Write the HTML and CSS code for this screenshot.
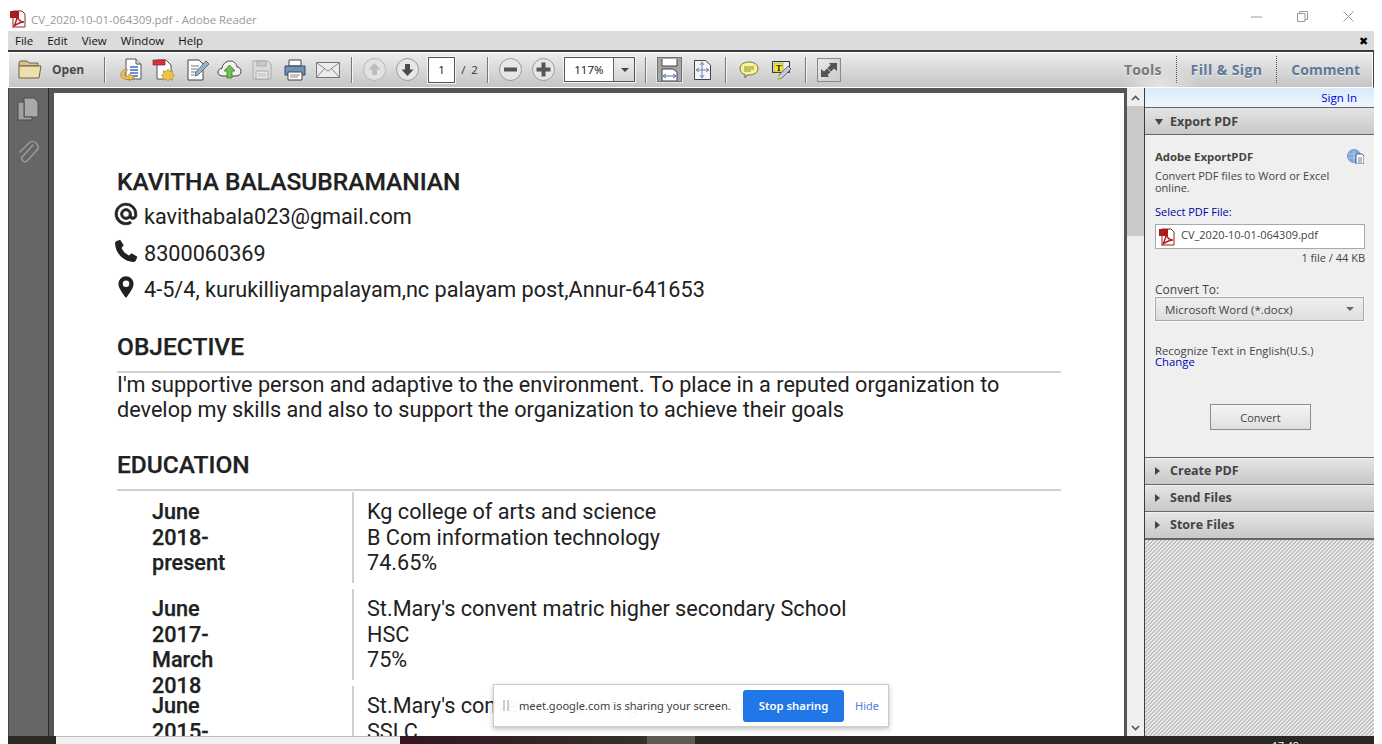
FILE: index.html
```html
<!DOCTYPE html>
<html lang="en">
<head>
  <meta charset="UTF-8">
  <title>CV_2020-10-01-064309.pdf - Adobe Reader</title>
  <link rel="stylesheet" href="styles.css">
</head>
<body>
<div class="window">

  <!-- title bar -->
  <div class="titlebar">
    <svg class="pdf-icon" width="17" height="18" viewBox="0 0 17 18"><path d="M3 1h9l3 3v13H3z" fill="#fff" stroke="#8a2a2a"/><path d="M0 1h9v7H0z" fill="#a81c1c"/><path d="M4 16c2-4 3-7 3-10 1 4 3 6 7 6-4 0-7 2-10 4z" fill="none" stroke="#b71c1c" stroke-width="1.4"/></svg>
    <span class="title-text">CV_2020-10-01-064309.pdf - Adobe Reader</span>
    <div class="win-buttons">
      <svg width="11" height="11" viewBox="0 0 11 11"><path d="M0 6h11" stroke="#999"/></svg>
      <svg width="11" height="11" viewBox="0 0 11 11"><path d="M.5 2.500h7.500v8h-7.500zM2.500 2.500v-2h8v8h-2.500" fill="none" stroke="#999"/></svg>
      <svg width="11" height="11" viewBox="0 0 11 11"><path d="M.5.500l10 10M10.500.500l-10 10" stroke="#999"/></svg>
    </div>
  </div>

  <!-- menu -->
  <div class="menubar">
    <span>File</span><span>Edit</span><span>View</span><span>Window</span><span>Help</span>
    <span class="menu-close">&#10006;</span>
  </div>

  <!-- toolbar -->
  <div class="toolbar">
    <svg class="tb-folder" width="24" height="19" viewBox="0 0 24 19"><path d="M1 3l1-2h7l2 2h9v3H1z" fill="#d9c38a" stroke="#6d6243"/><path d="M1 18V6h22l-2 12z" fill="#eedfae" stroke="#6d6243"/></svg>
    <span class="tb-open">Open</span>
    <span class="tb-sep sep-open"></span>

    <div class="tb-group">
      <svg width="23" height="24" viewBox="0 0 23 24"><path d="M7 1h10l5 5v15H7z" fill="#fff" stroke="#555"/><path d="M17 1v5h5" fill="#ddd" stroke="#555"/><path d="M11 9h8M11 12h8M11 15h8M13 18h6" stroke="#3a6fc0" stroke-width="1.300"/><path d="M8 11c-5 1-7 4-6 7 1 3 5 4 9 3l-1 2 6-4-6-3v2c-3 1-5 0-5-2 0-1 1-2 3-3z" fill="#edc04f" stroke="#a5802a" stroke-width=".7"/></svg>
      <svg width="23" height="24" viewBox="0 0 23 24"><path d="M5 2h9l5 5v14H5z" fill="#fff" stroke="#555"/><path d="M1 2h12v5H1z" fill="#d8333a" stroke="#8d1f23" stroke-width=".7"/><path d="M16 11l1.800 2.600 3-.8-.4 3 2.400 1.700-2.400 1.700.4 3-3-.8-1.800 1.500-1.800-1.500-3 .8.400-3-2.400-1.700 2.400-1.700-.4-3 3 .8z" fill="#eec247" stroke="#ad8a28" stroke-width=".6"/></svg>
      <svg class="tb-notes" width="22" height="22" viewBox="0 0 22 22"><path d="M1 1h11l4 4v16H1z" fill="#fff" stroke="#444"/><path d="M4 7h8M4 10h7M4 13h5M4 16h3" stroke="#777"/><path d="M8 17l1-4L19 2l3 3L11 16z" fill="#9db2cc" stroke="#3b5478" stroke-width=".8"/></svg>
      <svg class="tb-cloud" width="25" height="19" viewBox="0 0 25 19"><path d="M6 16c-3 0-5-1.500-5-4s2-3.500 4-3.500C5.500 4 9 1 13 1s6.500 2.500 7 6c2.500 0 4 2 4 4.500S22 16 19 16z" fill="#f2f2f2" stroke="#444"/><path d="M12.500 5l5.500 6h-3v7h-5v-7H7z" fill="#6fc24a" stroke="#3c7d25" stroke-width=".8"/></svg>
      <svg width="20" height="20" viewBox="0 0 20 20"><path d="M1 1h15l3 3v15H1z" fill="#dcdcdc" stroke="#aaa"/><path d="M5 1h9v5H5z" fill="#c9c9c9" stroke="#aaa"/><path d="M4 11h12v8H4z" fill="#e8e8e8" stroke="#aaa"/><path d="M6 14h8M6 16h8" stroke="#bbb"/></svg>
      <svg class="tb-print" width="22" height="22" viewBox="0 0 22 22"><path d="M5 1h12v6H5z" fill="#fff" stroke="#444"/><path d="M1 7h20v9H1z" fill="#7391b5" stroke="#2b4a73" stroke-linejoin="round"/><path d="M4 13h14v8H4z" fill="#fff" stroke="#444"/><path d="M6 16h10M6 18h8" stroke="#888"/></svg>
      <svg width="24" height="16" viewBox="0 0 24 16"><path d="M.5.500h23v15H.5z" fill="#ececec" stroke="#777"/><path d="M.5.500L12 9 23.500.500M.5 15.500l8-9M23.500 15.500l-8-9" fill="none" stroke="#888"/></svg>
    </div>
    <span class="tb-sep sep-send"></span>

    <div class="tb-group">
      <svg width="23" height="23" viewBox="0 0 23 23"><circle cx="11.500" cy="11.500" r="11" fill="#e2e2e2" stroke="#b5b5b5"/><path d="M11.500 5l6 6.500h-3.500V17H9v-5.500H5.500z" fill="#bcbcbc"/></svg>
      <svg width="23" height="23" viewBox="0 0 23 23"><circle cx="11.500" cy="11.500" r="11" fill="#e6e6e6" stroke="#999"/><path d="M11.500 18l-6-6.500H9V6h5v5.500h3.500z" fill="#4a4a4a"/></svg>
      <span class="page-input">1</span>
      <span class="page-total">/ 2</span>
    </div>
    <span class="tb-sep sep-page"></span>

    <div class="tb-group">
      <svg width="23" height="23" viewBox="0 0 23 23"><circle cx="11.500" cy="11.500" r="11" fill="#e6e6e6" stroke="#999"/><path d="M5 9.500h13v4H5z" fill="#555"/></svg>
      <svg width="23" height="23" viewBox="0 0 23 23"><circle cx="11.500" cy="11.500" r="11" fill="#e6e6e6" stroke="#999"/><path d="M9.500 4.500h4v5h5v4h-5v5h-4v-5h-5v-4h5z" fill="#555"/></svg>
      <div class="zoom-select">
        <span class="zoom-value">117%</span>
        <span class="zoom-arrow"></span>
      </div>
    </div>
    <span class="tb-sep sep-zoom"></span>

    <span class="fit-btn">
      <svg width="17" height="22" viewBox="0 0 17 22"><path d="M1 0v7h15V0" fill="#fff" stroke="#444"/><path d="M1 10h11l4 3v9H1z" fill="#fff" stroke="#444"/><path d="M2 17h13M2 17l3-2M2 17l3 2M15 17l-3-2M15 17l-3 2" stroke="#4a6eb0" fill="none"/></svg>
    </span>
    <svg class="tb-fitall" width="17" height="20" viewBox="0 0 17 20"><path d="M.5.500h11l5 4.500v14.500H.5z" fill="#f4f4f4" stroke="#444"/><path d="M8 2v16M2 10h13M8 2L6 5M8 2l2 3M8 18l-2-3M8 18l2-3M2 10l3-2M2 10l3 2M15 10l-3-2M15 10l-3 2" stroke="#6b84bd" fill="none"/></svg>
    <span class="tb-sep sep-fit"></span>

    <svg class="tb-note" width="20" height="18" viewBox="0 0 20 18"><path d="M10 1c5 0 9 2.500 9 6.500S15 14 10 14H8l-2 3 0-3.500C3 13 1 10.500 1 7.500 1 3.500 5 1 10 1z" fill="#fbf48c" stroke="#6e6e55"/><path d="M5 6h10M5 8h10M5 10h7" stroke="#8c8a4a"/></svg>
    <svg class="tb-markup" width="20" height="20" viewBox="0 0 20 20"><path d="M.5 1.500h17v11H.5z" fill="#eee" stroke="#333"/><path d="M2 3h9v9H2z" fill="#fbee2a" stroke="#777" stroke-width=".5"/><text class="tb-t" x="3.800" y="10.500">T</text><path d="M6 19l1-4 9-9 3 3-9 9z" fill="#c3c9d4" stroke="#6c7380"/><path d="M5 19l2-4 3 3z" fill="#edcd55"/></svg>
    <span class="tb-sep sep-note"></span>

    <span class="full-btn">
      <svg width="18" height="18" viewBox="0 0 18 18"><path d="M9 2h8v8l-3-2.500-3 3L7.500 7l3-3zM9 16H1V8l3 2.500 3-3L10.500 11l-3 3z" fill="#545454"/></svg>
    </span>

    <div class="tb-tabs">
      <span class="tab tab-tools">Tools</span>
      <span class="tab-sep"></span>
      <span class="tab tab-fill">Fill &amp; Sign</span>
      <span class="tab-sep"></span>
      <span class="tab">Comment</span>
    </div>
  </div>

  <!-- main area -->
  <div class="main">
    <div class="nav-pane">
      <svg width="22" height="24" viewBox="0 0 22 24"><path d="M7 1h10l4 4v15H7z" fill="#a9a9a9" stroke="#4d4d4d"/><path d="M1 5h6v15h8v3H1z" fill="#a0a0a0" stroke="#4d4d4d"/></svg>
      <svg width="22" height="24" viewBox="0 0 22 24"><path d="M16 5l-10 11c-2 2-1 4 0 5s3 1 5-1l9-10c2-2 1-5-1-7s-5-2-7 0L3 12" fill="none" stroke="#9a9a9a" stroke-width="1.600" stroke-linecap="round"/></svg>
    </div>

    <div class="doc-view">
      <div class="page">
        <h1 class="cv-name">KAVITHA BALASUBRAMANIAN</h1>
        <div class="contact contact-first">
          <svg width="26" height="26" viewBox="0 0 24 24"><path d="M12 2a10 10 0 1 0 5 18.600l-1-1.800A8 8 0 1 1 20 12v1c0 1-.7 1.800-1.600 1.800S17 14 17 13v-1a5 5 0 1 0-1.500 3.600c.7.900 1.700 1.400 2.900 1.400 2 0 3.600-1.700 3.600-4v-1A10 10 0 0 0 12 2zm0 13a3 3 0 1 1 0-6 3 3 0 0 1 0 6z" fill="#212121" stroke="#212121" stroke-width=".7"/></svg>
          <span>kavithabala023@gmail.com</span>
        </div>
        <div class="contact">
          <svg width="26" height="26" viewBox="0 0 24 24"><path d="M6.600 1.500l3.300 5.300-2 2.500c1.200 3 3.800 5.600 6.800 6.800l2.500-2 5.300 3.300-1.500 3.700c-.4.700-1 1-1.800 1C10 22 2 14 1.900 4.800c0-.8.300-1.400 1-1.800z" fill="#212121"/></svg>
          <span>8300060369</span>
        </div>
        <div class="contact">
          <svg width="26" height="26" viewBox="0 0 24 24"><path d="M12 2a7 7 0 0 0-7 7c0 5 7 13 7 13s7-8 7-13a7 7 0 0 0-7-7zm0 10a3 3 0 1 1 0-6 3 3 0 0 1 0 6z" fill="#212121"/></svg>
          <span>4-5/4, kurukilliyampalayam,nc palayam post,Annur-641653</span>
        </div>

        <h2 class="section-head sec-objective">OBJECTIVE</h2>
        <p class="objective">I'm supportive person and adaptive to the environment. To place in a reputed organization to<br>develop my skills and also to support the organization to achieve their goals</p>

        <h2 class="section-head sec-education">EDUCATION</h2>
        <div class="edu-row">
          <div class="edu-date">June<br>2018-<br>present</div>
          <div class="edu-info">Kg college of arts and science<br>B Com information technology<br>74.65%</div>
        </div>
        <div class="edu-row">
          <div class="edu-date">June<br>2017-<br>March<br>2018</div>
          <div class="edu-info">St.Mary's convent matric higher secondary School<br>HSC<br>75%</div>
        </div>
        <div class="edu-row">
          <div class="edu-date">June<br>2015-</div>
          <div class="edu-info">St.Mary's convent matric higher secondary School<br>SSLC</div>
        </div>
      </div>
    </div>

    <div class="v-scroll">
      <svg class="sb-arrow" width="9" height="6" viewBox="0 0 9 6"><path d="M1 5l3.500-3.500L8 5" fill="none" stroke="#555" stroke-width="1.600"/></svg>
      <div class="sb-thumb"></div>
      <svg class="sb-arrow sb-down" width="9" height="6" viewBox="0 0 9 6"><path d="M1 1l3.500 3.500L8 1" fill="none" stroke="#555" stroke-width="1.600"/></svg>
    </div>

    <aside class="side-panel">
      <div class="sign-in"><a>Sign In</a></div>
      <div class="acc-head"><span class="arrow-down"></span>Export PDF</div>
      <div class="export-body">
        <div class="export-title">
          <b>Adobe ExportPDF</b>
          <svg width="17" height="15" viewBox="0 0 17 15"><circle cx="7" cy="7" r="6.500" fill="#7fa8dc" stroke="#4a72aa" stroke-width=".6"/><path d="M1 5h12M1 9h12M7 1v12" stroke="#cfe0f5" stroke-width=".6"/><path d="M9 5h6l2 2v8H9z" fill="#fff" stroke="#3c5f90"/><path d="M11 9h4M11 11h4M11 13h4" stroke="#3c5f90" stroke-width=".8"/></svg>
        </div>
        <p class="export-desc">Convert PDF files to Word or Excel online.</p>
        <div class="select-label">Select PDF File:</div>
        <div class="file-box">
          <svg width="17" height="18" viewBox="0 0 17 18"><path d="M3 1h9l3 3v13H3z" fill="#fff" stroke="#8a2a2a"/><path d="M0 1h9v7H0z" fill="#a81c1c"/><path d="M4 16c2-4 3-7 3-10 1 4 3 6 7 6-4 0-7 2-10 4z" fill="none" stroke="#b71c1c" stroke-width="1.400"/></svg>
          <span class="file-name">CV_2020-10-01-064309.pdf</span>
        </div>
        <div class="file-size">1 file / 44 KB</div>
        <div class="convert-label">Convert To:</div>
        <div class="convert-select">
          <span>Microsoft Word (*.docx)</span>
          <span class="select-arrow"></span>
        </div>
        <div class="recognize">Recognize Text in English(U.S.)</div>
        <div class="change">Change</div>
        <div class="convert-row"><span class="convert-btn">Convert</span></div>
      </div>
      <div class="acc-head acc-line"><span class="arrow-right"></span>Create PDF</div>
      <div class="acc-head acc-line"><span class="arrow-right"></span>Send Files</div>
      <div class="acc-head acc-line"><span class="arrow-right"></span>Store Files</div>
      <div class="hatch"></div>
    </aside>

    <div class="share-bar">
      <span class="share-pause"></span>
      <span class="share-text">meet.google.com is sharing your screen.</span>
      <span class="share-stop">Stop sharing</span>
      <span class="share-hide">Hide</span>
    </div>
  </div>

  <!-- bottom edge of the desktop -->
  <div class="bottom-strip">
    <span class="strip-dark"></span>
    <span class="strip-light"></span>
    <span class="strip-maroon"></span>
    <span class="strip-tab"></span>
    <span class="strip-rest"><span class="strip-clock">17:48</span></span>
  </div>
</div>
</body>
</html>
```

FILE: styles.css
```css
* {
  box-sizing: border-box;
}
html, body {
  margin: 0;
  height: 744px;
  overflow: hidden;
  background: #fff;
}
body {
  font-family: "Open Sans", sans-serif;
}
.window {
  display: flex;
  flex-direction: column;
  width: 1366px;
  height: 744px;
  margin-left: 8px;
}

/* title bar */
.titlebar {
  height: 31px;
  display: flex;
  align-items: center;
  padding: 7px 0 0 2px;
  flex: none;
}
.title-text {
  margin-left: 4px;
  font-size: 11.350px;
  color: #999;
}
.win-buttons {
  margin-left: auto;
  display: flex;
  gap: 35px;
  padding-right: 20px;
  margin-top: -5px;
}

/* menu */
.menubar {
  height: 19px;
  flex: none;
  background: #dcdcdc;
  display: flex;
  align-items: center;
  gap: 14px;
  padding-left: 7px;
  font-size: 11.500px;
  color: #111;
}
.menu-close {
  margin-left: auto;
  margin-right: 6px;
  font-size: 11px;
  color: #000;
}

/* toolbar */
.toolbar {
  height: 38px;
  flex: none;
  display: flex;
  align-items: center;
  background: linear-gradient(#ededed, #c5c5c5);
  border-top: 2px solid #3c3c3c;
  border-right: 1px solid #3c3c3c;
  border-bottom: 1px solid #fff;
  box-shadow: inset 0 1px 0 #fff, inset 1px 0 0 #fff, inset -1px 0 0 #fff;
  padding-left: 10px;
}
.tb-open {
  margin-left: 10px;
  font-size: 12px;
  font-weight: 700;
  color: #4a4a4a;
}
.tb-sep {
  width: 2px;
  height: 26px;
  flex: none;
  background: #777;
  border-right: 1px solid #f5f5f5;
}
.sep-open { margin: 0 13px 0 20px; }
.sep-send { margin: 0 10px 0 11px; }
.sep-page { margin: 0 10px 0 9px; }
.sep-zoom { margin: 0 9px 0 10px; }
.sep-fit { margin: 0 12px 0 14px; }
.sep-note { margin: 0 10px 0 13px; }
.tb-group {
  display: flex;
  align-items: center;
  gap: 10px;
}
.tb-notes { margin-left: 2px; }
.tb-cloud { margin-left: -2px; }
.tb-print { margin-left: 2px; }
.page-input {
  width: 27px;
  height: 26px;
  margin-left: -1px;
  background: #fff;
  border: 1px solid #555;
  outline: 1px solid #f5f5f5;
  font-size: 11.500px;
  color: #111;
  display: flex;
  align-items: center;
  justify-content: center;
}
.page-total {
  margin-left: -4px;
  font-size: 11.500px;
  color: #333;
  word-spacing: 3px;
}
.zoom-select {
  display: flex;
  width: 71px;
  height: 25px;
  margin-left: -1px;
  border: 1px solid #555;
  outline: 1px solid #f5f5f5;
  background: #fff;
}
.zoom-value {
  width: 48px;
  font-size: 11.500px;
  color: #111;
  display: flex;
  align-items: center;
  justify-content: center;
}
.zoom-arrow {
  flex: 1;
  position: relative;
  border-left: 1px solid #666;
  background: linear-gradient(#eee, #d5d5d5);
}
.zoom-arrow::after {
  content: "";
  position: absolute;
  left: 7px;
  top: 10px;
  border: 4px solid transparent;
  border-top: 4px solid #444;
}
.fit-btn {
  width: 27px;
  height: 27px;
  flex: none;
  background: #a6a6a6;
  border: 1px solid #e8e8e8;
  box-shadow: inset 0 0 0 1px #707070;
  display: flex;
  align-items: center;
  justify-content: center;
}
.tb-fitall { margin-left: 11px; }
.tb-markup { margin-left: 13px; }
.tb-t {
  font-family: "Liberation Serif", serif;
  font-size: 9px;
  font-weight: 700;
  fill: #222;
}
.full-btn {
  width: 24px;
  height: 24px;
  flex: none;
  background: linear-gradient(135deg, #e9e9e9, #c9c9c9);
  border: 1px solid #8a8a8a;
  display: flex;
  align-items: center;
  justify-content: center;
}
.tb-tabs {
  margin-left: auto;
  align-self: stretch;
  display: flex;
  align-items: center;
  gap: 14px;
  padding-right: 13px;
  background: radial-gradient(ellipse 40px 22px at 37px 100%, #e6e6e6, transparent);
}
.tab {
  font-size: 14px;
  font-weight: 700;
  color: #5f7898;
  text-shadow: 0 1px 0 #eee;
}
.tab-tools {
  color: #7a7a78;
  letter-spacing: 0.200px;
}
.tab-fill {
  letter-spacing: 0.400px;
}
.tab-sep {
  height: 27px;
  border-left: 1px dotted #555;
}

/* main area */
.main {
  position: relative;
  flex: 1;
  min-height: 0;
  display: flex;
  overflow: hidden;
}
.nav-pane {
  width: 41px;
  flex: none;
  background: #666;
  border-right: 1px solid #2c2c2c;
  box-shadow: inset 1px 0 0 #444;
  display: flex;
  flex-direction: column;
  align-items: center;
  gap: 19px;
  padding-top: 9px;
}
.doc-view {
  flex: 1;
  min-width: 0;
  background: #555;
  padding: 5px 3px 0 5px;
  overflow: hidden;
}
.page {
  height: 100%;
  background: #fff;
  padding: 0 63px;
  overflow: hidden;
  font-family: Roboto, sans-serif;
  color: #212121;
}
.cv-name {
  margin: 73px 0 0;
  font-size: 24.500px;
  line-height: 32px;
  font-weight: 500;
  -webkit-text-stroke: 0.250px #212121;
}
.contact {
  display: flex;
  align-items: center;
  height: 36px;
  font-size: 21.650px;
  margin-top: 0;
}
.contact-first {
  height: 37px;
}
.contact svg {
  margin-left: -4px;
  margin-right: 5px;
  margin-top: -5px;
  flex: none;
}
.section-head {
  margin: 0;
  height: 41px;
  font-size: 24.500px;
  line-height: 30px;
  font-weight: 500;
  border-bottom: 2px solid #d0d0d0;
  -webkit-text-stroke: 0.250px #212121;
}
.sec-objective {
  margin-top: 25px;
}
.objective {
  margin: -1px 0 0;
  font-size: 21.650px;
  line-height: 25px;
}
.sec-education {
  margin-top: 28px;
  margin-bottom: 1px;
}
.edu-row {
  display: flex;
  height: 91px;
  margin-left: 35px;
  margin-bottom: 6px;
}
.edu-date {
  width: 200px;
  flex: none;
  padding-top: 7px;
  font-size: 21.650px;
  line-height: 25.600px;
  font-weight: 500;
  -webkit-text-stroke: 0.250px #212121;
}
.edu-info {
  flex: 1;
  border-left: 2px solid #d0d0d0;
  padding: 7px 0 0 13px;
  font-size: 21.650px;
  line-height: 25.600px;
}

/* scrollbar */
.v-scroll {
  width: 17px;
  flex: none;
  background: #efefef;
  display: flex;
  flex-direction: column;
  align-items: center;
  padding-top: 7px;
}
.sb-thumb {
  align-self: stretch;
  height: 130px;
  margin-top: 5px;
  background: #c9c9c9;
}
.sb-down {
  margin-top: auto;
  margin-bottom: 5px;
}

/* side panel */
.side-panel {
  width: 230px;
  flex: none;
  border-left: 1px solid #3c3c3c;
  display: flex;
  flex-direction: column;
  background: #efefef;
  color: #444;
}
.sign-in {
  height: 20px;
  flex: none;
  background: linear-gradient(#d9eafa, #eef6fd);
  border-bottom: 1px solid #666;
  text-align: right;
  padding-right: 17px;
  font-size: 11.500px;
  line-height: 19px;
  color: #0000dd;
}
.acc-head {
  height: 27px;
  flex: none;
  display: flex;
  align-items: center;
  padding-left: 10px;
  background: linear-gradient(#e4e4e4, #c8c8c8);
  font-size: 12.500px;
  font-weight: 700;
  color: #444;
  border-bottom: 1px solid #666;
}
.acc-line {
  border-top: 1px solid #f0f0f0;
  padding-bottom: 2px;
}
.arrow-down {
  width: 0;
  height: 0;
  margin: 2px 7px 0 0;
  border: 4px solid transparent;
  border-top: 6px solid #444;
  border-bottom: 0;
}
.arrow-right {
  width: 0;
  height: 0;
  margin-right: 10px;
  border: 4px solid transparent;
  border-left: 5px solid #444;
  border-right: 0;
}
.export-body {
  height: 323px;
  flex: none;
  padding: 13px 10px 0;
  font-size: 11px;
  background: #efefef;
  border-bottom: 1px solid #666;
}
.export-title {
  display: flex;
  justify-content: space-between;
  align-items: center;
  height: 16px;
  color: #444;
}
.export-title b {
  font-size: 11.400px;
}
.export-desc {
  margin: 6px 0 0;
  width: 190px;
  line-height: 12px;
}
.select-label {
  margin-top: 11px;
  color: #0000a5;
  line-height: 14px;
}
.file-box {
  display: flex;
  align-items: center;
  gap: 5px;
  height: 25px;
  width: 210px;
  margin-top: 5px;
  background: #fff;
  border: 1px solid #a8a8a8;
  padding: 0 3px;
  color: #444;
}
.file-name {
  margin-bottom: 4px;
}
.file-size {
  margin-top: 2px;
  width: 210px;
  text-align: right;
  line-height: 14px;
}
.convert-label {
  margin-top: 18px;
  font-size: 12px;
  line-height: 14px;
}
.convert-select {
  display: flex;
  align-items: center;
  justify-content: space-between;
  width: 209px;
  height: 24px;
  margin-top: 0;
  border: 1px solid #a8a8a8;
  outline: 1px solid #fafafa;
  background: linear-gradient(#efefef, #dedede);
  padding: 0 9px;
  font-size: 11.500px;
}
.select-arrow {
  width: 0;
  height: 0;
  border: 4px solid transparent;
  border-top: 4px solid #666;
  border-bottom: 0;
}
.recognize {
  margin-top: 23px;
  font-size: 11.300px;
  line-height: 14px;
}
.change {
  margin-top: -1px;
  font-size: 11.300px;
  color: #0000c0;
  line-height: 10px;
}
.convert-row {
  margin-top: 37px;
  padding-left: 55px;
}
.convert-btn {
  display: flex;
  align-items: center;
  justify-content: center;
  width: 101px;
  height: 26px;
  border: 1px solid #8d8d8d;
  background: linear-gradient(#f5f5f5, #dfdfdf);
  font-size: 11px;
}
.hatch {
  flex: 1;
  background: repeating-linear-gradient(135deg, #bfbfbf 0, #bfbfbf 1.414px, #ebebeb 1.414px, #ebebeb 2.828px);
  border-top: 1px solid #666;
}

/* screen share notice, floats over the document */
.share-bar {
  position: absolute;
  left: 485px;
  top: 596px;
  width: 396px;
  height: 43px;
  display: flex;
  align-items: center;
  background: rgba(255, 255, 255, 0.97);
  border: 1px solid #ccc;
  box-shadow: 0 2px 5px rgba(0, 0, 0, 0.25);
  font-family: "Noto Sans", sans-serif;
  color: #3c4043;
}
.share-pause {
  width: 6px;
  height: 11px;
  margin-left: 9px;
  border-left: 2px solid #ccc;
  border-right: 2px solid #ccc;
}
.share-text {
  margin-left: 10px;
  width: 224px;
  font-size: 11.100px;
}
.share-stop {
  width: 101px;
  height: 32px;
  display: flex;
  align-items: center;
  justify-content: center;
  background: #2277e8;
  border-radius: 3px;
  color: #fff;
  font-size: 11.300px;
  font-weight: 600;
}
.share-hide {
  margin-left: 11px;
  color: #4e7fe0;
  font-size: 11px;
}

/* bottom edge */
.bottom-strip {
  height: 8px;
  flex: none;
  display: flex;
  overflow: hidden;
  background: #2a2825;
}
.strip-dark {
  width: 48px;
  background: #2c2b26;
}
.strip-light {
  width: 344px;
  background: #f0f0f0;
  border-top: 1px solid #bbb;
}
.strip-maroon {
  width: 247px;
  background: linear-gradient(90deg, #33151f, #33312b);
}
.strip-tab {
  width: 48px;
  background: #5d5b54;
}
.strip-rest {
  flex: 1;
  position: relative;
}
.strip-clock {
  position: absolute;
  left: 577px;
  top: 4px;
  font-size: 10.500px;
  line-height: 12px;
  color: #fff;
}
```
